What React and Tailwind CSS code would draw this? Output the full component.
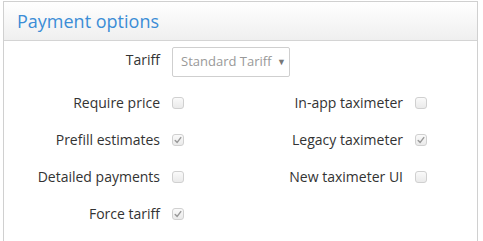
import React from "react";

function Box({ checked }) {
  return (
    <span className="flex h-[12px] w-[12px] items-center justify-center rounded-[3px] border border-[#d0d0d0] bg-gradient-to-b from-[#fafafa] to-[#eaeaea]">
      {checked && (
        <svg viewBox="0 0 10 10" className="h-[8px] w-[8px]">
          <path
            d="M1.5 5.5 L4 8 L8.5 2"
            fill="none"
            stroke="#999"
            strokeWidth="1.8"
            strokeLinecap="round"
            strokeLinejoin="round"
          />
        </svg>
      )}
    </span>
  );
}

function Field({ label, checked }) {
  return (
    <div className="flex h-[37px] items-center">
      <div className="w-[156px] text-right">{label}</div>
      <div className="ml-[12px]">
        <Box checked={checked} />
      </div>
    </div>
  );
}

export default function App() {
  const rows = [
    [
      ["Require price", false],
      ["In-app taximeter", false],
    ],
    [
      ["Prefill estimates", true],
      ["Legacy taximeter", true],
    ],
    [
      ["Detailed payments", false],
      ["New taximeter UI", false],
    ],
    [["Force tariff", true], null],
  ];

  return (
    <div className="h-[241px] w-[483px] overflow-hidden bg-white pl-[3px] pt-[1px] font-['Open_Sans',sans-serif] text-[14px] text-[#333]">
      <div className="h-[260px] w-[475px] border border-[#d0d0d0]">
        {/* header */}
        <div className="flex h-[39px] items-center border-b border-[#d4d4d4] bg-gradient-to-b from-white to-[#efefef] pl-[13px]">
          <span className="text-[18px] leading-none text-[#3b8dd6]">
            Payment options
          </span>
        </div>

        <div className="pt-[6px]">
          {/* tariff row */}
          <div className="flex h-[30px] items-start">
            <div className="w-[156px] pt-[2px] text-right">Tariff</div>
            <div className="ml-[12px] flex h-[30px] w-[118px] items-center justify-between whitespace-nowrap rounded-[2px] border border-[#cfcfcf] bg-white pl-[8px] pr-[3px] text-[13px] text-[#999]">
              <span>Standard Tariff</span>
              <span className="text-[9px] text-[#777]">▼</span>
            </div>
          </div>

          <div className="mt-[7px]">
            {rows.map((r, i) => (
              <div key={i} className="grid grid-cols-[243px_243px]">
                <Field label={r[0][0]} checked={r[0][1]} />
                {r[1] ? <Field label={r[1][0]} checked={r[1][1]} /> : <div />}
              </div>
            ))}
          </div>
        </div>
      </div>
    </div>
  );
}
